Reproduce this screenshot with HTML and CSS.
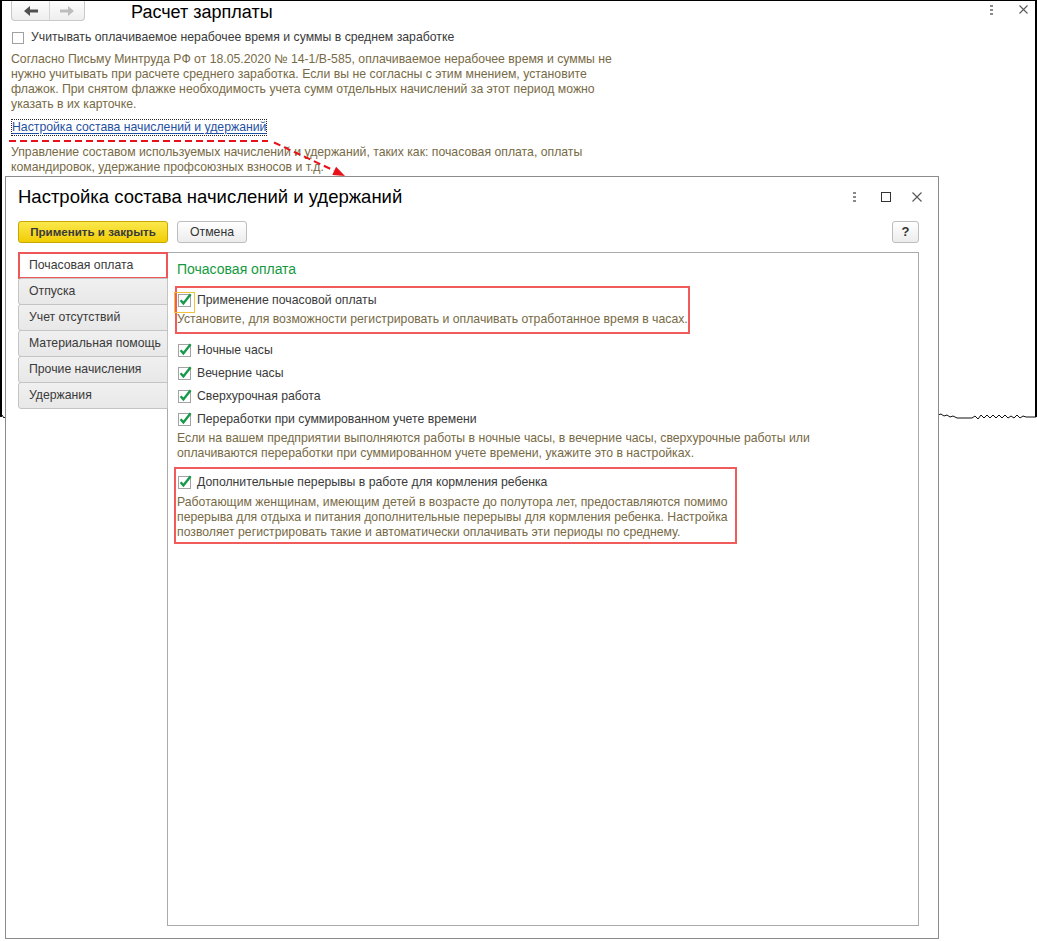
FILE: index.html
```html
<!DOCTYPE html>
<html lang="ru">
<head>
<meta charset="utf-8">
<title>Настройка состава начислений и удержаний</title>
<link rel="stylesheet" href="styles.css">
</head>
<body>
<div class="desktop">
  <section class="bgwin">
    <header class="bg-top">
      <div class="nav">
        <span class="nav-btn"><svg class="arrow-ico" width="14" height="10" viewBox="0 0 14 10"><path d="M0 5 L6 0 L6 3.5 L14 3.5 L14 6.5 L6 6.5 L6 10 Z" fill="#505050"/></svg></span>
        <span class="nav-btn"><svg class="arrow-ico" width="14" height="10" viewBox="0 0 14 10"><path d="M14 5 L8 0 L8 3.5 L0 3.5 L0 6.5 L8 6.5 L8 10 Z" fill="#bdbdbd"/></svg></span>
      </div>
      <h1 class="bg-title">Расчет зарплаты</h1>
      <div class="tools bg-tools">
        <span class="dots"><i></i><i></i><i></i></span>
        <svg class="close" width="9" height="9" viewBox="0 0 9 9"><path d="M0.5 0.5 L8.5 8.5 M8.5 0.5 L0.5 8.5" stroke="#5a5a5a" stroke-width="1.1"/></svg>
      </div>
    </header>
    <div class="bg-body">
      <div class="chk-row"><span class="cb-empty"></span><span class="label">Учитывать оплачиваемое нерабочее время и суммы в среднем заработке</span></div>
      <p class="note bg-note">Согласно Письму Минтруда РФ от 18.05.2020 № 14-1/В-585, оплачиваемое нерабочее время и суммы не<br>нужно учитывать при расчете среднего заработка. Если вы не согласны с этим мнением, установите<br>флажок. При снятом флажке необходимость учета сумм отдельных начислений за этот период можно<br>указать в их карточке.</p>
      <a class="link" href="#">Настройка состава начислений и удержаний</a>
      <p class="note bg-note2">Управление составом используемых начислений и удержаний, таких как: почасовая оплата, оплаты<br>командировок, удержание профсоюзных взносов и т.д.</p>
    </div>
  </section>

  <svg class="torn" width="1037" height="12" viewBox="0 410 1037 12">
    <polyline fill="none" stroke="#111" stroke-width="1" points="0,417 2,415 4,418 6,416 938,415 941,414 944,416 947,415 950,417 953,416 957,418 972,418 975,416 978,419 981,415 984,418 987,415 990,418 993,415 996,418 999,415 1002,418 1005,415 1008,418 1011,416 1014,418 1017,415 1020,418 1023,416 1026,417 1036,417"/>
  </svg>

  <section class="modal">
    <header class="m-head">
      <h2 class="m-title">Настройка состава начислений и удержаний</h2>
      <div class="tools m-tools">
        <span class="dots"><i></i><i></i><i></i></span>
        <span class="maxi"></span>
        <svg class="close" width="10" height="10" viewBox="0 0 10 10"><path d="M0.5 0.5 L9.5 9.5 M9.5 0.5 L0.5 9.5" stroke="#555" stroke-width="1.1"/></svg>
      </div>
    </header>
    <div class="m-toolbar">
      <button class="btn btn-primary" type="button">Применить и закрыть</button>
      <button class="btn btn-cancel" type="button">Отмена</button>
      <button class="btn btn-help" type="button">?</button>
    </div>
    <div class="m-body">
      <nav class="tabs">
        <div class="tab active">Почасовая оплата</div>
        <div class="tab">Отпуска</div>
        <div class="tab">Учет отсутствий</div>
        <div class="tab">Материальная помощь</div>
        <div class="tab">Прочие начисления</div>
        <div class="tab">Удержания</div>
      </nav>
      <div class="panel">
        <h3 class="group-title">Почасовая оплата</h3>

        <div class="hl hl-1">
          <div class="opt opt-first"><span class="cb focus"><svg width="15" height="15" viewBox="0 0 15 15"><rect x="0.5" y="1.5" width="12" height="12" fill="#fff" stroke="#a3a3a3"/><path d="M2.6 7.2 L5.4 10.4 L12.6 1.2" fill="none" stroke="#16994a" stroke-width="2.4"/></svg></span><span class="label">Применение почасовой оплаты</span></div>
          <div class="note">Установите, для возможности регистрировать и оплачивать отработанное время в часах.</div>
        </div>

        <div class="opts">
          <div class="opt"><span class="cb"><svg width="15" height="15" viewBox="0 0 15 15"><rect x="0.5" y="1.5" width="12" height="12" fill="#fff" stroke="#a3a3a3"/><path d="M2.6 7.2 L5.4 10.4 L12.6 1.2" fill="none" stroke="#16994a" stroke-width="2.4"/></svg></span><span class="label">Ночные часы</span></div>
          <div class="opt"><span class="cb"><svg width="15" height="15" viewBox="0 0 15 15"><rect x="0.5" y="1.5" width="12" height="12" fill="#fff" stroke="#a3a3a3"/><path d="M2.6 7.2 L5.4 10.4 L12.6 1.2" fill="none" stroke="#16994a" stroke-width="2.4"/></svg></span><span class="label">Вечерние часы</span></div>
          <div class="opt"><span class="cb"><svg width="15" height="15" viewBox="0 0 15 15"><rect x="0.5" y="1.5" width="12" height="12" fill="#fff" stroke="#a3a3a3"/><path d="M2.6 7.2 L5.4 10.4 L12.6 1.2" fill="none" stroke="#16994a" stroke-width="2.4"/></svg></span><span class="label">Сверхурочная работа</span></div>
          <div class="opt"><span class="cb"><svg width="15" height="15" viewBox="0 0 15 15"><rect x="0.5" y="1.5" width="12" height="12" fill="#fff" stroke="#a3a3a3"/><path d="M2.6 7.2 L5.4 10.4 L12.6 1.2" fill="none" stroke="#16994a" stroke-width="2.4"/></svg></span><span class="label">Переработки при суммированном учете времени</span></div>
        </div>
        <div class="note">Если на вашем предприятии выполняются работы в ночные часы, в вечерние часы, сверхурочные работы или<br>оплачиваются переработки при суммированном учете времени, укажите это в настройках.</div>

        <div class="hl hl-2">
          <div class="opt opt-first"><span class="cb"><svg width="15" height="15" viewBox="0 0 15 15"><rect x="0.5" y="1.5" width="12" height="12" fill="#fff" stroke="#a3a3a3"/><path d="M2.6 7.2 L5.4 10.4 L12.6 1.2" fill="none" stroke="#16994a" stroke-width="2.4"/></svg></span><span class="label">Дополнительные перерывы в работе для кормления ребенка</span></div>
          <div class="note">Работающим женщинам, имеющим детей в возрасте до полутора лет, предоставляются помимо<br>перерыва для отдыха и питания дополнительные перерывы для кормления ребенка. Настройка<br>позволяет регистрировать такие и автоматически оплачивать эти периоды по среднему.</div>
        </div>
      </div>
    </div>
  </section>

  <svg class="annot" width="1037" height="941" viewBox="0 0 1037 941">
    <line x1="9" y1="141" x2="268" y2="141" stroke="#e8101a" stroke-width="2" stroke-dasharray="7 4"/>
    <line x1="274" y1="142.5" x2="334" y2="170.5" stroke="#e8101a" stroke-width="2" stroke-dasharray="7 4"/>
    <polygon points="345,176 332.3,175 336.1,166.8" fill="#e8101a"/>
  </svg>
</div>
</body>
</html>
```

FILE: styles.css
```css
* { box-sizing: border-box; }

html, body {
  margin: 0;
  background: #fff;
}

body {
  font-family: "Liberation Sans", Arial, sans-serif;
  font-size: 12.25px;
  color: #3a3a3a;
}

.desktop {
  position: relative;
  width: 1037px;
  height: 941px;
  overflow: hidden;
  background: #fff;
}

/* ---------- background window ---------- */
.bgwin {
  position: absolute;
  left: 0;
  top: 0;
  width: 1037px;
  height: 417px;
  border-top: 1px solid #000;
  border-left: 2px solid #000;
  border-right: 2px solid #000;
  background: #fff;
  overflow: hidden;
}

.bg-top {
  display: flex;
  align-items: flex-start;
  height: 23px;
}

.nav {
  display: flex;
  margin-left: 9px;
  margin-top: -2px;
  height: 22px;
  border: 1px solid #c9c9c9;
  border-top: none;
  border-radius: 0 0 4px 4px;
  background: linear-gradient(#ffffff, #eeeeee);
}

.nav-btn {
  display: flex;
  align-items: center;
  justify-content: center;
  width: 37px;
  padding-top: 2px;
}

.nav-btn + .nav-btn {
  width: 35px;
  border-left: 1px solid #d5d5d5;
}

.bg-title {
  margin: 0 0 0 46px;
  font-size: 18px;
  font-weight: normal;
  line-height: 22px;
  color: #000;
  white-space: nowrap;
}

.tools {
  display: flex;
  align-items: center;
  margin-left: auto;
}

.bg-tools {
  height: 17px;
  padding-right: 7px;
  gap: 26px;
}

.dots {
  display: flex;
  flex-direction: column;
  gap: 2px;
}

.dots i {
  display: block;
  width: 3px;
  height: 2px;
  background: #8a8a8a;
}

.bg-body {
  padding: 6px 0 0 9px;
}

.chk-row {
  display: flex;
  align-items: center;
  height: 15px;
  line-height: 15px;
  white-space: nowrap;
}

.cb-empty {
  width: 12px;
  height: 12px;
  margin-left: 1px;
  margin-right: 7px;
  border: 1px solid #a0a0a0;
  background: #fff;
}

.note {
  margin: 0;
  line-height: 15px;
  color: #776a45;
  white-space: nowrap;
}

.bg-note {
  margin-top: 7px;
}

.link {
  display: inline-block;
  margin-top: 7px;
  border: 1px dotted #222;
  line-height: 15px;
  color: #1f51a3;
  text-decoration: underline;
  text-underline-offset: 2px;
  white-space: nowrap;
}

.bg-note2 {
  margin-top: 9px;
}

.torn {
  position: absolute;
  left: 0;
  top: 410px;
}

/* ---------- modal ---------- */
.modal {
  position: absolute;
  left: 5px;
  top: 176px;
  width: 934px;
  height: 763px;
  display: flex;
  flex-direction: column;
  padding: 0 19px 12px 12px;
  border: 1px solid #8c8c8c;
  background: #fff;
}

.m-head {
  display: flex;
  align-items: center;
  height: 32px;
  padding-top: 8px;
}

.m-title {
  margin: 0;
  font-size: 18.5px;
  font-weight: normal;
  line-height: 24px;
  color: #000;
  white-space: nowrap;
}

.m-tools {
  margin-right: -3px;
  gap: 0;
}

.m-tools .dots {
  margin-right: 25px;
}

.maxi {
  width: 10px;
  height: 10px;
  margin-right: 21px;
  border: 1px solid #333;
}

.m-toolbar {
  display: flex;
  align-items: center;
  margin-top: 12px;
  height: 22px;
}

.btn {
  height: 22px;
  padding: 0;
  border-radius: 3px;
  font-family: inherit;
  font-size: 12.25px;
  color: #333;
  line-height: 20px;
  cursor: pointer;
}

.btn-primary {
  width: 150px;
  border: 1px solid #c8a800;
  background: linear-gradient(#fbe84c, #f1cd05);
  font-weight: bold;
  font-size: 11.6px;
  color: #3a3a3a;
}

.btn-cancel {
  width: 70px;
  margin-left: 9px;
  border: 1px solid #bdbdbd;
  background: linear-gradient(#ffffff, #ececec);
}

.btn-help {
  width: 27px;
  margin-left: auto;
  border: 1px solid #bdbdbd;
  background: linear-gradient(#ffffff, #ececec);
  font-weight: bold;
  font-size: 13px;
}

.m-body {
  flex: 1;
  display: flex;
  margin-top: 9px;
}

.tabs {
  position: relative;
  z-index: 1;
  width: 150px;
  margin-right: -1px;
  display: flex;
  flex-direction: column;
}

.tab {
  height: 27px;
  margin-top: -1px;
  padding-left: 10px;
  border: 1px solid #c4c4c4;
  border-radius: 3px 0 0 3px;
  background: linear-gradient(#f0f0f0, #e8e8e8);
  line-height: 25px;
  color: #3a3a3a;
  white-space: nowrap;
}

.tab.active {
  margin-top: 0;
  background: #fff;
  border-color: #b0b0b0;
  border-right-color: #fff;
  border-radius: 0;
  outline: 2px solid #ee5757;
  outline-offset: -2px;
}

.panel {
  flex: 1;
  padding: 7px 0 0 9px;
  border: 1px solid #aaaaaa;
}

.group-title {
  margin: 0;
  font-size: 14px;
  font-weight: normal;
  line-height: 18px;
  color: #139a3e;
}

.hl {
  width: fit-content;
  border: 2px solid #f05b5b;
}

.hl-1 {
  margin: 8px 0 0 -2px;
  padding: 0 0 5px 0;
}

.hl-2 {
  margin: 6px 0 0 -3px;
  padding: 0 7px 2px 1px;
}

.opt {
  display: flex;
  align-items: center;
  height: 23px;
  line-height: 15px;
  white-space: nowrap;
}

.opt-first {
  height: 24px;
}

.hl-2 .opt-first {
  height: 26px;
}

.cb {
  position: relative;
  display: flex;
  width: 15px;
  height: 15px;
  margin-left: 1px;
  margin-right: 4px;
}

.cb.focus::after {
  content: "";
  position: absolute;
  left: -4px;
  top: -1px;
  width: 19px;
  height: 19px;
  border: 1px solid #f3c23c;
}

.opts {
  margin-top: 5px;
}

.annot {
  position: absolute;
  left: 0;
  top: 0;
  pointer-events: none;
}
```
